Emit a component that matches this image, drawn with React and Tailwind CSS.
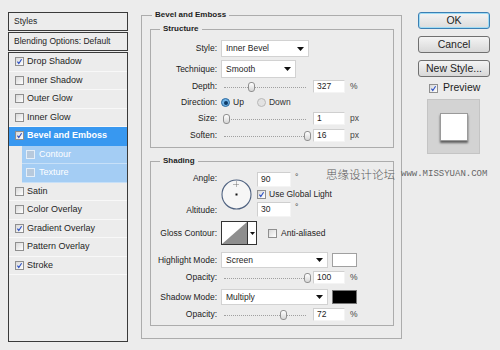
import React from 'react';

const styleItems = [
  { label: 'Drop Shadow', checked: true },
  { label: 'Inner Shadow' },
  { label: 'Outer Glow' },
  { label: 'Inner Glow' },
  { label: 'Bevel and Emboss', checked: true, active: true },
  { label: 'Contour', sub: true },
  { label: 'Texture', sub: true },
  { label: 'Satin' },
  { label: 'Color Overlay' },
  { label: 'Gradient Overlay', checked: true },
  { label: 'Pattern Overlay' },
  { label: 'Stroke', checked: true },
];

function Tick() {
  return (
    <svg width="9" height="9" viewBox="0 0 9 9">
      <path d="M1.8 4.6 L3.6 7 L7.2 1.6" fill="none" stroke="#2a4fc4" strokeWidth="1.4" />
    </svg>
  );
}

function Checkbox({ checked, sub }) {
  if (sub) {
    return <span className="w-[9px] h-[9px] border border-[#e4eef8] bg-[#b7c9dc] shrink-0" />;
  }
  return (
    <span className="w-[9px] h-[9px] border border-[#8f8f8f] bg-linear-to-br from-[#d8d8d8] to-white flex items-center justify-center shrink-0">
      {checked && <Tick />}
    </span>
  );
}

function Select({ value, className }) {
  return (
    <div className={`bg-white border border-[#d2d2d2] flex items-center justify-between pl-[4px] pr-[4px] ${className}`}>
      <span>{value}</span>
      <svg width="7" height="4" viewBox="0 0 7 4">
        <path d="M0 0 H7 L3.5 4 Z" fill="#111" />
      </svg>
    </div>
  );
}

function NumInput({ value, unit }) {
  return (
    <>
      <div className="ml-[4px] w-[32px] h-[13px] bg-white border border-[#cfcfcf] border-b-[#f4f4f4] border-r-[#f4f4f4] flex items-center pl-[3px]">
        {value}
      </div>
      <span className="ml-[5px] text-[#444]">{unit}</span>
    </>
  );
}

function Slider({ pos }) {
  return (
    <div className="relative w-[88px] h-[12px]">
      <div className="absolute left-[3px] right-[3px] top-[6px] border-t border-dotted border-[#a0a0a0]" />
      <div
        className="absolute top-[1px] w-[7px] h-[10px] -ml-[3.5px] rounded-[3px] border border-[#909090] bg-linear-to-b from-white to-[#d6d6d6]"
        style={{ left: pos }}
      />
    </div>
  );
}

function Row({ label, className, children }) {
  return (
    <div className={`flex items-center ${className}`}>
      <span className="w-[66px] text-right text-[#222]">{label}</span>
      <div className="ml-[4px] flex items-center h-full">{children}</div>
    </div>
  );
}

function Radio({ on }) {
  return on ? (
    <span className="w-[9px] h-[9px] rounded-full border border-[#2d6aa0] bg-[#6fb2e6] flex items-center justify-center shrink-0">
      <span className="w-[4px] h-[4px] rounded-full bg-[#0d3a66]" />
    </span>
  ) : (
    <span className="w-[9px] h-[9px] rounded-full border border-[#b8b8b8] bg-[#e2e2e2] shrink-0" />
  );
}

function AngleDial() {
  return (
    <svg width="31" height="31" viewBox="0 0 31 31">
      <circle cx="15.5" cy="15.5" r="14.5" fill="#f6f6f6" stroke="#4f6280" strokeWidth="1.1" />
      <path d="M15.5 2.5 V8.5 M12.5 5.5 H18.5" stroke="#555" strokeWidth="0.8" strokeDasharray="1 1" />
      <rect x="14.5" y="14.5" width="2" height="2" fill="#111" />
    </svg>
  );
}

function ContourPicker() {
  return (
    <div className="flex h-[24px] border border-[#333] bg-white">
      <svg width="25" height="22" viewBox="0 0 25 22">
        <rect width="25" height="22" fill="#fff" />
        <path d="M0 22 L25 0 V22 Z" fill="#8e8e8e" />
      </svg>
      <div className="w-[9px] border-l border-[#333] flex items-center justify-center">
        <svg width="5" height="3" viewBox="0 0 5 3">
          <path d="M0 0 H5 L2.5 3 Z" fill="#111" />
        </svg>
      </div>
    </div>
  );
}

export default function App() {
  return (
    <div className="w-[500px] h-[350px] bg-[#ececec] relative overflow-hidden flex font-['Liberation_Sans',Arial,sans-serif] text-[8.5px] text-[#1e1e1e]">
      {/* Styles list */}
      <div className="ml-[8px] mt-[12px] w-[120px] flex flex-col">
        <div className="h-[19px] border border-[#3a3a3a] flex items-center pl-[5px]">Styles</div>
        <div className="mt-[1px] h-[19px] border border-[#3a3a3a] flex items-center pl-[5px]">Blending Options: Default</div>
        <div className="mt-[1px] h-[290px] border border-[#3a3a3a] flex flex-col">
          {styleItems.map((it) =>
            it.sub ? (
              <div key={it.label} className="h-[18.5px] ml-[13px] bg-[#a4cdf4] border-b border-[#c7e0f8] flex items-center pl-[4px] gap-[3px] text-white text-[9px]">
                <Checkbox sub />
                <span className="ml-[1px]">{it.label}</span>
              </div>
            ) : (
              <div
                key={it.label}
                className={`h-[18.5px] flex items-center pl-[6px] gap-[3px] border-b ${
                  it.active ? 'bg-[#3898f0] border-[#3898f0] text-white font-bold text-[9px]' : 'border-[#f8f8f8] text-[9px]'
                }`}
              >
                <Checkbox checked={it.checked} />
                <span>{it.label}</span>
              </div>
            )
          )}
        </div>
      </div>

      {/* Bevel and Emboss panel */}
      <fieldset className="ml-[13px] mt-[9px] w-[261px] self-start border border-[#acacac] pl-[8px] pr-[7px] pb-[12px]">
        <legend className="ml-[2px] px-[3px] text-[8px] font-bold leading-[12px]">Bevel and Emboss</legend>

        <fieldset className="mt-[2px] border border-[#acacac] pb-[5px]">
          <legend className="ml-[9px] px-[3px] text-[8px] font-bold leading-[12px]">Structure</legend>
          <Row label="Style:" className="mt-[5px] h-[17px]">
            <Select value="Inner Bevel" className="w-[88px] h-[17px]" />
          </Row>
          <Row label="Technique:" className="mt-[3px] h-[18px]">
            <Select value="Smooth" className="w-[75px] h-[18px]" />
          </Row>
          <Row label="Depth:" className="mt-[2px] h-[13px]">
            <Slider pos={30} />
            <NumInput value="327" unit="%" />
          </Row>
          <Row label="Direction:" className="mt-[3px] h-[13px]">
            <Radio on />
            <span className="ml-[3px]">Up</span>
            <span className="ml-[13px] flex items-center"><Radio /></span>
            <span className="ml-[3px] text-[#333]">Down</span>
          </Row>
          <Row label="Size:" className="mt-[3px] h-[13px]">
            <Slider pos={5} />
            <NumInput value="1" unit="px" />
          </Row>
          <Row label="Soften:" className="mt-[4px] h-[13px]">
            <Slider pos={86} />
            <NumInput value="16" unit="px" />
          </Row>
        </fieldset>

        <fieldset className="mt-[7px] border border-[#acacac] pb-[3px]">
          <legend className="ml-[9px] px-[3px] text-[8px] font-bold leading-[12px]">Shading</legend>
          <div className="mt-[5px] flex h-[46px]">
            <div className="w-[66px] flex flex-col items-end">
              <span className="h-[12px] leading-[12px]">Angle:</span>
              <span className="mt-[20px] h-[12px] leading-[12px]">Altitude:</span>
            </div>
            <div className="ml-[4px] mt-[7px]">
              <AngleDial />
            </div>
            <div className="ml-[5px] flex flex-col">
              <div className="flex items-start">
                <div className="w-[34px] h-[15px] bg-white border border-[#cfcfcf] border-b-[#f4f4f4] border-r-[#f4f4f4] flex items-center pl-[3px]">90</div>
                <span className="ml-[4px] -mt-[1px] text-[#444]">°</span>
              </div>
              <div className="mt-[2px] h-[10px] flex items-center gap-[3px]">
                <Checkbox checked />
                <span>Use Global Light</span>
              </div>
              <div className="mt-[3px] flex items-start">
                <div className="w-[34px] h-[15px] bg-white border border-[#cfcfcf] border-b-[#f4f4f4] border-r-[#f4f4f4] flex items-center pl-[3px]">30</div>
                <span className="ml-[4px] -mt-[1px] text-[#444]">°</span>
              </div>
            </div>
          </div>
          <Row label="Gloss Contour:" className="mt-[3px] h-[24px]">
            <ContourPicker />
            <span className="ml-[11px] flex items-center"><Checkbox /></span>
            <span className="ml-[4px]">Anti-aliased</span>
          </Row>
          <Row label="Highlight Mode:" className="mt-[7px] h-[16px]">
            <Select value="Screen" className="w-[107px] h-[16px]" />
            <div className="ml-[4px] w-[25px] h-[14px] bg-white border border-[#a0a0a0]" />
          </Row>
          <Row label="Opacity:" className="mt-[2px] h-[15px]">
            <Slider pos={86} />
            <NumInput value="100" unit="%" />
          </Row>
          <Row label="Shadow Mode:" className="mt-[4px] h-[16px]">
            <Select value="Multiply" className="w-[107px] h-[16px]" />
            <div className="ml-[4px] w-[25px] h-[14px] bg-black border border-[#777]" />
          </Row>
          <Row label="Opacity:" className="mt-[2px] h-[15px]">
            <Slider pos={62} />
            <NumInput value="72" unit="%" />
          </Row>
        </fieldset>
      </fieldset>

      {/* Buttons */}
      <div className="ml-[16px] mt-[12px] w-[72px] flex flex-col text-[10.5px]">
        <button className="h-[17px] rounded-[3px] border border-[#3b7fb3] bg-linear-to-b from-[#f4f4f4] to-[#dcdcdc] shadow-[inset_0_0_0_1px_#9fdcf5] leading-none">OK</button>
        <button className="mt-[7px] h-[17px] rounded-[3px] border border-[#707070] bg-linear-to-b from-[#f4f4f4] to-[#d8d8d8] leading-none">Cancel</button>
        <button className="mt-[7px] h-[17px] rounded-[3px] border border-[#707070] bg-linear-to-b from-[#f4f4f4] to-[#d8d8d8] leading-none">New Style...</button>
        <div className="mt-[6px] h-[10px] flex items-center pl-[11px] gap-[5px]">
          <Checkbox checked />
          <span>Preview</span>
        </div>
        <div className="mt-[6px] ml-[9px] w-[53px] h-[55px] bg-[#d3d3d3] border border-[#c4c4c4] flex items-center justify-center">
          <div className="w-[28px] h-[28px] bg-white border border-[#9a9a9a] shadow-[0_2px_2px_rgba(0,0,0,0.55)]" />
        </div>
      </div>

      {/* watermark */}
      <div className="absolute left-[326px] top-[169px] flex items-center pointer-events-none">
        <span className="text-[11.5px] text-[#5a5a5a] font-['Noto_Sans_CJK_SC',sans-serif] font-light leading-none">思缘设计论坛</span>
        <span className="ml-[6px] text-[9px] text-[#666] font-['Liberation_Mono',monospace] leading-none">www.MISSYUAN.COM</span>
      </div>
    </div>
  );
}
